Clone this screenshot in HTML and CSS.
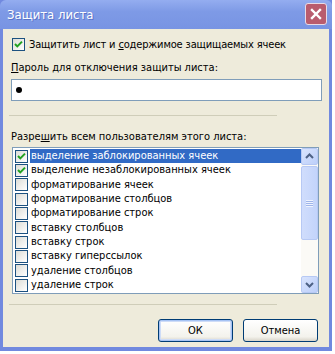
FILE: index.html
```html
<!DOCTYPE html>
<html lang="ru">
<head>
    <meta charset="UTF-8">
    <title>Защита листа</title>
    <link rel="stylesheet" href="styles.css">
</head>
<body>
    <div class="window">
        <div class="titlebar">
            <span class="title">Защита листа</span>
            <span class="close">
                <svg width="20" height="20" viewBox="0 0 20 20">
                    <path d="M6 6 L14 14 M14 6 L6 14" stroke="#fff" stroke-width="2.4" stroke-linecap="square"/>
                </svg>
            </span>
        </div>
        <div class="dialog">
            <div class="check-row">
                <span class="box checked">
                    <svg width="11" height="11" viewBox="0 0 11 11"><path d="M2 5 L4.3 7.4 L9 2.6" fill="none" stroke="#21a121" stroke-width="2"/></svg>
                </span>
                <span>Защитить лист и <u>с</u>одержимое защищаемых ячеек</span>
            </div>

            <div class="label"><u>П</u>ароль для отключения защиты листа:</div>
            <div class="input"><span class="dot"></span></div>

            <div class="sep"></div>

            <div class="label label-list">Разре<u>ш</u>ить всем пользователям этого листа:</div>
            <div class="listbox">
                <ul class="items">
                    <li class="item selected">
                        <span class="box checked"><svg width="11" height="11" viewBox="0 0 11 11"><path d="M2 5 L4.3 7.4 L9 2.6" fill="none" stroke="#21a121" stroke-width="2"/></svg></span>
                        <span class="text">выделение заблокированных ячеек</span>
                    </li>
                    <li class="item">
                        <span class="box checked"><svg width="11" height="11" viewBox="0 0 11 11"><path d="M2 5 L4.3 7.4 L9 2.6" fill="none" stroke="#21a121" stroke-width="2"/></svg></span>
                        <span class="text">выделение незаблокированных ячеек</span>
                    </li>
                    <li class="item"><span class="box"></span><span class="text">форматирование ячеек</span></li>
                    <li class="item"><span class="box"></span><span class="text">форматирование столбцов</span></li>
                    <li class="item"><span class="box"></span><span class="text">форматирование строк</span></li>
                    <li class="item"><span class="box"></span><span class="text">вставку столбцов</span></li>
                    <li class="item"><span class="box"></span><span class="text">вставку строк</span></li>
                    <li class="item"><span class="box"></span><span class="text">вставку гиперссылок</span></li>
                    <li class="item"><span class="box"></span><span class="text">удаление столбцов</span></li>
                    <li class="item"><span class="box"></span><span class="text">удаление строк</span></li>
                </ul>
                <div class="scrollbar">
                    <div class="sb-btn">
                        <svg width="15" height="15" viewBox="0 0 15 15"><path d="M4 9 L7.5 5.5 L11 9" fill="none" stroke="#4d6185" stroke-width="2"/></svg>
                    </div>
                    <div class="sb-track">
                        <div class="sb-thumb"><span class="grip"></span></div>
                    </div>
                    <div class="sb-btn">
                        <svg width="15" height="15" viewBox="0 0 15 15"><path d="M4 6 L7.5 9.5 L11 6" fill="none" stroke="#4d6185" stroke-width="2"/></svg>
                    </div>
                </div>
            </div>

            <div class="sep sep-bottom"></div>

            <div class="buttons">
                <button class="btn default">ОК</button>
                <button class="btn">Отмена</button>
            </div>
        </div>
    </div>
</body>
</html>
```

FILE: styles.css
```css
body {
    margin: 0;
    background-color: #ffffff;
    font-family: "DejaVu Sans Condensed", "DejaVu Sans", sans-serif;
    font-size: 11px;
    color: #000;
}

.window {
    width: 332px;
    height: 351px;
    box-sizing: border-box;
    padding: 0 3px 4px 3px;
    background-color: #7189df;
    display: flex;
    flex-direction: column;
}

.titlebar {
    height: 29px;
    margin: 0 -3px;
    padding: 0 5px 0 7px;
    display: flex;
    align-items: center;
    justify-content: space-between;
    background: linear-gradient(#94adf0, #7e9ae6 40%, #7894e3);
    border-radius: 6px 6px 0 0;
}

.title {
    color: #ffffff;
    font-size: 13px;
    text-shadow: 1px 1px 0 #5a72c8;
}

.close {
    width: 20px;
    height: 20px;
    margin-top: -2px;
    background-color: #b95c6e;
    border: 1px solid #e8dbe6;
    border-radius: 3px;
    display: flex;
}

.dialog {
    flex: 1;
    background-color: #eeebdb;
    padding: 0 0 0 8px;
}

.check-row {
    margin: 9px 0 0 1px;
    height: 13px;
    display: flex;
    align-items: center;
    gap: 4px;
    line-height: 13px;
    letter-spacing: -0.15px;
}

.box {
    width: 13px;
    height: 13px;
    box-sizing: border-box;
    border: 1px solid #1c5180;
    background: linear-gradient(135deg, #dcdcd6, #ffffff);
    display: flex;
    align-items: center;
    justify-content: center;
    flex-shrink: 0;
}

.label {
    margin-top: 10px;
    line-height: 14px;
}

.input {
    margin-top: 4px;
    width: 311px;
    height: 22px;
    box-sizing: border-box;
    border: 1px solid #7f9db9;
    background-color: #ffffff;
    display: flex;
    align-items: center;
    padding-left: 4px;
}

.dot {
    width: 6px;
    height: 6px;
    border-radius: 50%;
    background-color: #000;
}

.sep {
    margin: 14px 0 0 -2px;
    width: 268px;
    height: 1px;
    background-color: #cfcdb9;
}

.label-list {
    margin-top: 14px;
}

.listbox {
    margin: 3px 0 0 1px;
    width: 307px;
    height: 147px;
    box-sizing: border-box;
    border: 1px solid #7f9db9;
    background-color: #ffffff;
    display: flex;
}

.items {
    list-style: none;
    margin: 0;
    padding: 1px 0 0 0;
    flex: 1;
}

.item {
    height: 14.33px;
    display: flex;
    align-items: center;
    padding-left: 2px;
}

.item .text {
    flex: 1;
    margin-left: 2px;
    padding-left: 1px;
    line-height: 14px;
}

.item.selected .text {
    background-color: #316ac5;
    color: #ffffff;
}

.scrollbar {
    width: 17px;
    display: flex;
    flex-direction: column;
    background-color: #fbfaf6;
}

.sb-btn {
    height: 17px;
    box-sizing: border-box;
    border: 1px solid #b7c9f4;
    border-radius: 2px;
    background: linear-gradient(135deg, #d9e4fd, #bccffa);
    display: flex;
    align-items: center;
    justify-content: center;
}

.sb-track {
    flex: 1;
}

.sb-thumb {
    margin-top: 1px;
    height: 74px;
    box-sizing: border-box;
    border: 1px solid #b7c9f4;
    border-radius: 2px;
    background: linear-gradient(90deg, #d0ddfc, #c3d4fb);
    display: flex;
    align-items: center;
    justify-content: center;
}

.grip {
    width: 7px;
    height: 7px;
    background: repeating-linear-gradient(#eef3fe 0 1px, #9fb5ea 1px 2px);
}

.sep-bottom {
    margin-top: 10px;
}

.buttons {
    margin-top: 14px;
    padding-right: 11px;
    display: flex;
    justify-content: flex-end;
    gap: 10px;
}

.btn {
    width: 75px;
    height: 23px;
    font-family: inherit;
    font-size: 11px;
    border: 1px solid #003c74;
    border-radius: 3px;
    background: linear-gradient(#ffffff, #f3f2ec 80%, #d8d4c9);
    padding: 0;
}

.btn.default {
    box-shadow: inset 0 0 0 1px #a6c3f4, inset 0 0 0 2px #cedcf7;
}
```
